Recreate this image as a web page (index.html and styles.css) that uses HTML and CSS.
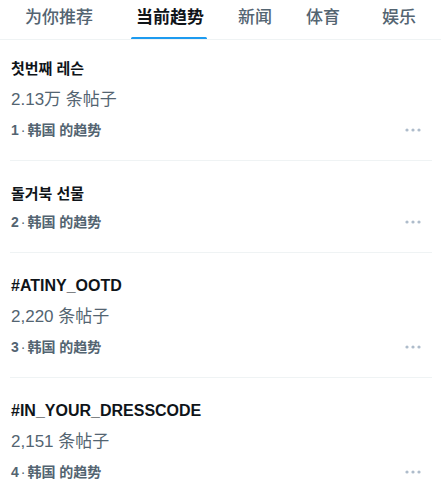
FILE: index.html
```html
<!DOCTYPE html>
<html lang="zh-CN">
<head>
    <meta charset="UTF-8">
    <meta name="viewport" content="width=device-width, initial-scale=1.0">
    <title>趋势</title>
    <link rel="stylesheet" href="styles.css">
</head>
<body>
    <nav class="tabs">
        <a class="tab">为你推荐</a>
        <a class="tab active">当前趋势</a>
        <a class="tab">新闻</a>
        <a class="tab">体育</a>
        <a class="tab">娱乐</a>
    </nav>
    <ul class="trends">
        <li class="trend">
            <div class="trend-title ko">첫번째 레슨</div>
            <div class="trend-count">2.13万 条帖子</div>
            <div class="trend-meta">
                <span>1<span class="sep">·</span>韩国 的趋势</span>
                <svg class="more" viewBox="0 0 16 4"><circle cx="2" cy="2" r="1.6"/><circle cx="8" cy="2" r="1.6"/><circle cx="14" cy="2" r="1.6"/></svg>
            </div>
        </li>
        <li class="trend">
            <div class="trend-title ko">돌거북 선물</div>
            <div class="trend-meta">
                <span>2<span class="sep">·</span>韩国 的趋势</span>
                <svg class="more" viewBox="0 0 16 4"><circle cx="2" cy="2" r="1.6"/><circle cx="8" cy="2" r="1.6"/><circle cx="14" cy="2" r="1.6"/></svg>
            </div>
        </li>
        <li class="trend">
            <div class="trend-title">#ATINY_OOTD</div>
            <div class="trend-count">2,220 条帖子</div>
            <div class="trend-meta">
                <span>3<span class="sep">·</span>韩国 的趋势</span>
                <svg class="more" viewBox="0 0 16 4"><circle cx="2" cy="2" r="1.6"/><circle cx="8" cy="2" r="1.6"/><circle cx="14" cy="2" r="1.6"/></svg>
            </div>
        </li>
        <li class="trend">
            <div class="trend-title">#IN_YOUR_DRESSCODE</div>
            <div class="trend-count">2,151 条帖子</div>
            <div class="trend-meta">
                <span>4<span class="sep">·</span>韩国 的趋势</span>
                <svg class="more" viewBox="0 0 16 4"><circle cx="2" cy="2" r="1.6"/><circle cx="8" cy="2" r="1.6"/><circle cx="14" cy="2" r="1.6"/></svg>
            </div>
        </li>
    </ul>
</body>
</html>
```

FILE: styles.css
```css
body {
    margin: 0;
    background: #fff;
    color: #0f1419;
    font-family: "Liberation Sans", "Noto Sans CJK SC", sans-serif;
}
.tabs {
    display: flex;
    gap: 34px;
    height: 40px;
    box-sizing: border-box;
    padding-left: 25px;
    border-bottom: 1px solid #eff3f4;
    overflow: hidden;
}
.tab {
    position: relative;
    flex-shrink: 0;
    line-height: 31px;
    font-size: 17px;
    font-weight: 500;
    color: #536471;
    font-family: "Noto Sans CJK SC", sans-serif;
}
.tab:nth-child(1) {
    margin-right: 9px;
}
.tab:nth-child(4) {
    margin-right: 8px;
}
.tab.active {
    color: #0f1419;
    font-weight: 700;
}
.tab.active::after {
    content: "";
    position: absolute;
    left: -5px;
    right: -3px;
    bottom: -1px;
    height: 3px;
    border-radius: 2px;
    background: #1d9bf0;
}
.trends {
    list-style: none;
    margin: 0;
    padding: 0;
}
.trend {
    display: flex;
    flex-direction: column;
    gap: 7px;
    margin: 0 9px 0 10px;
    padding: 22px 11px 20px 1px;
    border-bottom: 1px solid #eff3f4;
}
.trend:first-child {
    padding-top: 18px;
}
.trend:last-child {
    border-bottom: none;
}
.trend-title {
    font-size: 16px;
    font-weight: 700;
    line-height: 22px;
}
.trend-title.ko {
    font-size: 15px;
}
.trend-count {
    font-size: 17px;
    line-height: 26px;
    color: #536471;
}
.trend-meta {
    display: flex;
    align-items: center;
    justify-content: space-between;
    font-size: 14px;
    font-weight: 700;
    line-height: 20px;
    color: #536471;
}
.trend-meta .sep {
    margin: 0 2px;
    font-weight: 400;
}
.more {
    width: 16px;
    height: 4px;
    fill: #aebccb;
}
```
